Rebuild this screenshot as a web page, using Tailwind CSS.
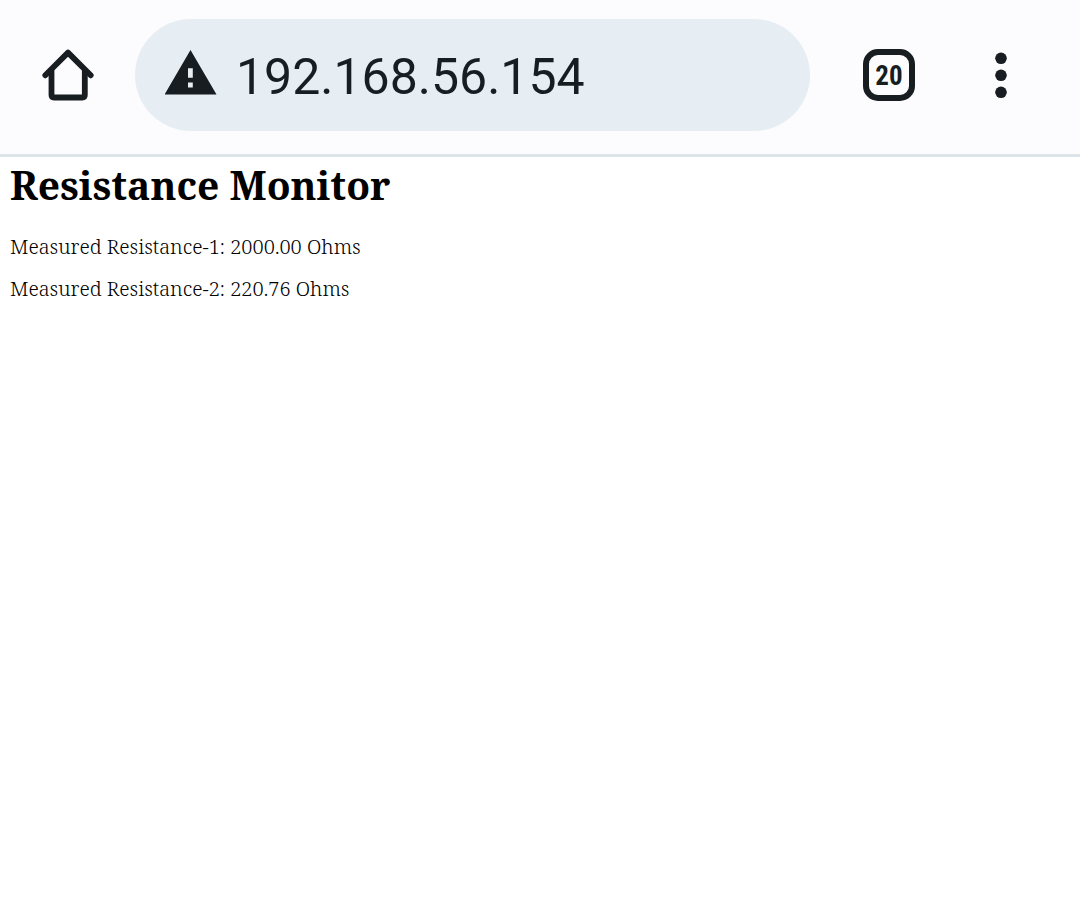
<!DOCTYPE html>
<html lang="en">
<head>
<meta charset="utf-8">
<meta name="viewport" content="width=device-width, initial-scale=1">
<title>Resistance Monitor</title>
<script src="https://cdn.jsdelivr.net/npm/@tailwindcss/browser@4"></script>
</head>
<body class="min-h-screen bg-white text-black">
<header class="flex items-center border-b-3 border-[#dce3e9] bg-[#fcfcff] pt-[19px] pb-[23px] font-['Roboto',sans-serif] text-[#171d20]">
  <button type="button" aria-label="Home" class="shrink-0 pr-[37px] pl-[38px]">
    <svg class="size-[60px]" viewBox="0 0 60 60" fill="none" stroke="currentColor" stroke-width="5.800" stroke-linecap="round" stroke-linejoin="round" aria-hidden="true">
      <path d="M7.300 30.300 30 7.600 52.700 30.300"/><path d="M13.500 26V50Q13.500 52.500 16 52.500H44.300Q46.800 52.500 46.800 50V26"/>
    </svg>
  </button>
  <label class="flex h-28 min-w-0 flex-1 items-center rounded-full bg-[#e6edf3] pr-8 pl-[30px]">
    <svg class="-mt-1 h-[46px] w-[52px] shrink-0" viewBox="0 0 52 46" fill="currentColor" aria-hidden="true">
      <path fill-rule="evenodd" d="M25.500 0 51.500 44.500H-.5ZM23 18.300V27.800H27.800V18.300ZM23 32.500V37.500H27.800V32.500Z"/>
    </svg>
    <input type="text" aria-label="Address" value="192.168.56.154" class="ml-[19px] min-w-0 flex-1 bg-transparent pt-1 text-[50px] leading-[60px] outline-none">
  </label>
  <div class="flex shrink-0 items-center pr-[49px] pl-[53px]">
    <button type="button" aria-label="20 open tabs" class="flex size-[52px] items-center justify-center rounded-[15px] border-6 border-current pt-0.5 font-['Roboto_Condensed','Roboto',sans-serif] text-[27px] leading-8 font-bold">20</button>
    <button type="button" aria-label="Menu" class="ml-[56px] flex w-[60px] justify-center">
      <svg class="h-12 w-3" viewBox="0 0 12 48" fill="currentColor" aria-hidden="true"><circle cx="6" cy="7.300" r="5.800"/><circle cx="6" cy="24.300" r="5.800"/><circle cx="6" cy="41.300" r="5.800"/></svg>
    </button>
  </div>
</header>
<main class="px-[10px] font-['Noto_Serif','Liberation_Serif',serif]">
  <h1 class="text-[39px] leading-[56px] font-bold">Resistance Monitor</h1>
  <p class="mt-5 text-[20px] leading-7 font-light">Measured Resistance-1: 2000.00 Ohms</p>
  <p class="mt-[14px] text-[20px] leading-7 font-light">Measured Resistance-2: 220.76 Ohms</p>
</main>
</body>
</html>
